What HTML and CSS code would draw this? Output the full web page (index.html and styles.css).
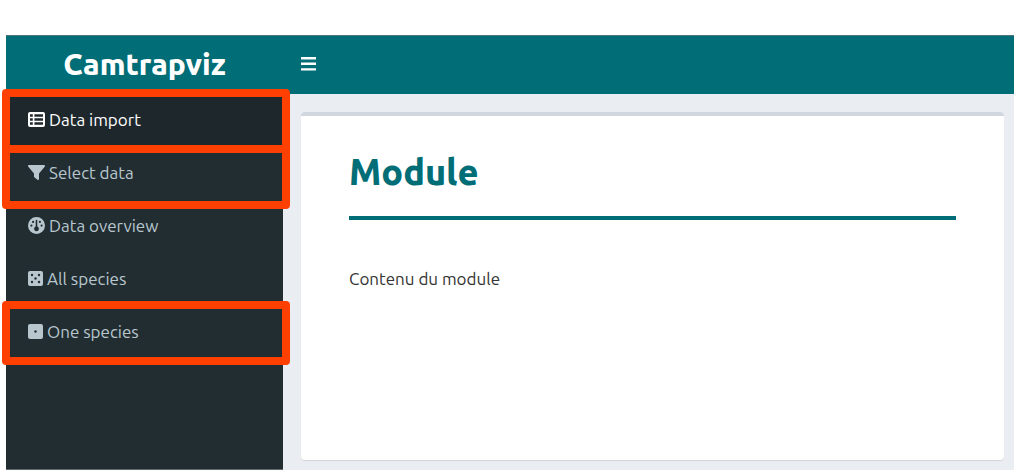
FILE: index.html
```html
<!DOCTYPE html>
<html lang="en">
<head>
<meta charset="utf-8">
<meta name="viewport" content="width=device-width, initial-scale=1">
<title>Camtrapviz</title>
<link rel="stylesheet" href="styles.css">
</head>
<body>
<div class="app">
  <header class="header">
    <a class="logo" href="#">Camtrapviz</a>
    <button class="toggle" type="button" aria-label="Toggle navigation">
      <svg class="bars" viewBox="0 0 15 14" aria-hidden="true"><path d="M0 0h15v2.4H0zM0 5.6h15V8H0zM0 11.2h15v2.4H0z"/></svg>
    </button>
  </header>
  <div class="body">
    <nav class="sidebar">
      <ul class="menu">
        <li class="item active marked">
          <a class="link" href="#">
            <svg class="icon wide" viewBox="0 0 17 15" aria-hidden="true"><path fill-rule="evenodd" d="M2 0h13a2 2 0 0 1 2 2v11a2 2 0 0 1-2 2H2a2 2 0 0 1-2-2V2a2 2 0 0 1 2-2zM2 2.2v2.6h2.800V2.200zM6.400 2.200v2.600H15V2.200zM2 6.300v2.400h2.800V6.300zM6.400 6.300v2.400H15V6.300zM2 10.200v2.600h2.800v-2.600zM6.400 10.200v2.600H15v-2.600z"/></svg>
            <span>Data import</span>
          </a>
        </li>
        <li class="item marked low">
          <a class="link" href="#">
            <svg class="icon wide" viewBox="0 0 17 15" aria-hidden="true"><path d="M1 0h15c.9 0 1.3 1 .7 1.7L11 8.400V14c0 .9-.8 1.200-1.500.8L6.600 12.600c-.4-.3-.6-.6-.6-1V8.400L.3 1.700C-.3 1 .1 0 1 0z"/></svg>
            <span>Select data</span>
          </a>
        </li>
        <li class="item">
          <a class="link" href="#">
            <svg class="icon round" viewBox="0 0 17 17" aria-hidden="true"><path fill-rule="evenodd" d="M8.500 0a8.500 8.500 0 1 1 0 17a8.500 8.500 0 0 1 0-17zM7.700 3.500v6.100a2.400 2.400 0 1 0 1.600 0V3.500a.8.800 0 0 0-1.600 0zM4 4.900a1.100 1.100 0 1 0 2.200 0a1.100 1.100 0 0 0-2.200 0zM10.800 4.900a1.100 1.100 0 1 0 2.200 0a1.100 1.100 0 0 0-2.200 0zM2.300 8.600a1.100 1.100 0 1 0 2.200 0a1.100 1.100 0 0 0-2.200 0zM12.500 8.600a1.100 1.100 0 1 0 2.200 0a1.100 1.100 0 0 0-2.200 0z"/></svg>
            <span>Data overview</span>
          </a>
        </li>
        <li class="item">
          <a class="link" href="#">
            <svg class="icon" viewBox="0 0 15 15" aria-hidden="true"><rect width="15" height="15" rx="2"/><g class="pips"><circle cx="4" cy="4" r="1.200"/><circle cx="11" cy="4" r="1.200"/><circle cx="7.500" cy="7.500" r="1.200"/><circle cx="4" cy="11" r="1.200"/><circle cx="11" cy="11" r="1.200"/></g></svg>
            <span>All species</span>
          </a>
        </li>
        <li class="item marked">
          <a class="link" href="#">
            <svg class="icon" viewBox="0 0 15 15" aria-hidden="true"><rect width="15" height="15" rx="2"/><circle class="pips" cx="7.500" cy="7.500" r="1.200"/></svg>
            <span>One species</span>
          </a>
        </li>
      </ul>
    </nav>
    <main class="content">
      <section class="box">
        <h1 class="title">Module</h1>
        <p class="text">Contenu du module</p>
      </section>
    </main>
  </div>
</div>
</body>
</html>
```
FILE: styles.css
```css
* { box-sizing: border-box; }

body {
  margin: 0;
  background: #fff;
  color: #333;
  font: 17px/24px Ubuntu, "Noto Sans", "Open Sans", sans-serif;
}

.app {
  display: flex;
  flex-direction: column;
  min-height: 100vh;
  padding: 35px 1px 1px 6px;
}

.header {
  display: flex;
  align-items: center;
  height: 59px;
  padding-bottom: 2px;
  background: #006d77;
  border-top: 1px solid #4c7779;
}

.logo {
  width: 277px;
  color: #fff;
  font-size: 30px;
  line-height: 40px;
  font-weight: 800;
  text-align: center;
  text-decoration: none;
}

.toggle {
  display: flex;
  padding: 18px;
  border: 0;
  background: none;
  cursor: pointer;
}

.bars { width: 15px; height: 14px; fill: #fff; }

.body { display: flex; flex: 1; }

.sidebar {
  width: 277px;
  background: #222d32;
  border-bottom: 1px solid #62696d;
}

.menu { margin: 0; padding: 0; list-style: none; }

.item { position: relative; }

.link {
  display: flex;
  align-items: center;
  gap: 4px;
  height: 53px;
  padding: 0 22px 2px;
  color: #b8c7ce;
  text-decoration: none;
}

.active .link { background: #1e282c; color: #fff; }

.icon { width: 15px; height: 15px; fill: currentColor; }
.icon.wide { width: 17px; }
.icon.round { width: 17px; height: 17px; }
.pips { fill: #222d32; }

/* Orange frame drawn over a menu entry */
.marked::after {
  content: "";
  position: absolute;
  z-index: 1;
  inset: -5px -7px -6px -4px;
  border: 8px solid #ff4000;
  border-radius: 4px;
  pointer-events: none;
}

.marked.low::after { inset: -2px -7px -9px -4px; }

.content {
  display: flex;
  flex: 1;
  padding: 18px 10px 10px 18px;
  background: #eaeef3;
}

.box {
  flex: 1;
  padding: 32px 48px;
  background: #fff;
  border-top: 4px solid #d2d6de;
  border-radius: 4px;
  box-shadow: 0 1px 1px rgba(0, 0, 0, 0.1);
}

.title {
  margin: 0 0 47px;
  padding-bottom: 20px;
  border-bottom: 4px solid #006d77;
  color: #006d77;
  font-size: 36px;
  line-height: 48px;
  font-weight: 800;
}

.text { margin: 0; }
```
